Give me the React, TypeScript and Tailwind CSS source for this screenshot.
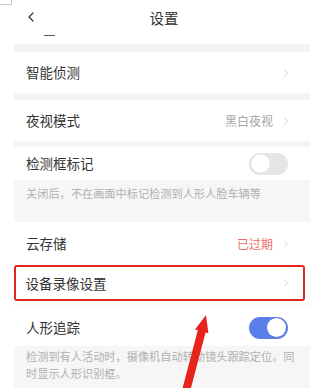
import { ChevronLeft, ChevronRight } from "lucide-react";

const font = { fontFamily: '"Noto Sans CJK SC", "Noto Sans", sans-serif' };

function Toggle({ on }: { on?: boolean }) {
    return (
        <div
            className={
                "w-[39px] h-[22px] rounded-full flex items-center px-[2px] " +
                (on ? "bg-[#5b7fe8] justify-end" : "bg-[#e6e6e6] justify-start")
            }
        >
            <div className="w-[19px] h-[19px] rounded-full bg-white shadow-[0_0_1px_rgba(0,0,0,0.2)]"></div>
        </div>
    );
}

function Row({ title, value, valueClass, toggle, on, height }: {
    title: string;
    value?: string;
    valueClass?: string;
    toggle?: boolean;
    on?: boolean;
    height: string;
}) {
    return (
        <div className={"flex items-center justify-between pl-3 pr-[18px] bg-white " + height}>
            <span className="text-[13.5px] text-[#333]">{title}</span>
            {toggle ? (
                <div className="mr-[4px]">
                    <Toggle on={on} />
                </div>
            ) : (
                <div className="flex items-center gap-[7px]">
                    {value && <span className={"text-[12px] " + valueClass}>{value}</span>}
                    <ChevronRight className="w-[12px] h-[12px] text-[#c4c4c4]" strokeWidth={1.6} />
                </div>
            )}
        </div>
    );
}

export default function App() {
    return (
        <div className="relative w-[328px] h-[388px] overflow-hidden bg-white" style={font}>
            {/* corner mark */}
            <div className="absolute top-0 left-0 w-[12px] h-[5px] border-b border-r border-[#c8c8c8]"></div>

            {/* Header */}
            <div className="relative h-[44px] flex items-start justify-center">
                <ChevronLeft className="absolute left-[23px] top-[9px] w-[16px] h-[16px] text-[#333]" strokeWidth={1.8} />
                <span className="mt-[7px] text-[14.5px] text-[#333]">设置</span>
                <div className="absolute left-[44px] top-[35px] w-[11px] h-px bg-[#555]"></div>
            </div>

            <div className="mx-[14px] w-[296px] flex flex-col">
                <div className="h-[8px] bg-[#f5f5f5]"></div>
                <Row title="智能侦测" height="h-[41px]" />
                <div className="h-[7px] bg-[#f5f5f5]"></div>
                <Row title="夜视模式" value="黑白夜视" valueClass="text-[#a6a6a6]" height="h-[41px]" />
                <div className="h-[6px] bg-[#f5f5f5]"></div>
                <Row title="检测框标记" toggle height="h-[33px]" />
                <div className="h-[42px] bg-[#f6f6f6] px-3 pt-[5px]">
                    <p className="text-[11.2px] leading-[16px] text-[#b0b0b0]">关闭后，不在画面中标记检测到人形人脸车辆等</p>
                </div>
                <Row title="云存储" value="已过期" valueClass="text-[#ef6b6b]" height="h-[43px]" />
                <div className="h-[36px] w-[291px] border-[2.5px] border-[#e0281f] rounded-[3px] flex items-center justify-between pl-[9.5px] pr-[11px]">
                    <span className="text-[13.5px] text-[#333]">设备录像设置</span>
                    <ChevronRight className="w-[12px] h-[12px] text-[#c4c4c4]" strokeWidth={1.6} />
                </div>
                <div className="h-[8px] bg-[#fcfcfc]"></div>
                <Row title="人形追踪" toggle on height="h-[37px]" />
                <div className="h-[60px] bg-[#f6f6f6] px-3 pt-[2px]">
                    <p className="text-[11.2px] leading-[17px] text-[#b0b0b0]">
                        检测到有人活动时，摄像机自动转动镜头跟踪定位。同时显示人形识别框。
                    </p>
                </div>
            </div>

            {/* red annotation arrow */}
            <svg className="absolute left-0 top-0 pointer-events-none" width="328" height="388" viewBox="0 0 328 388">
                <polygon
                    points="182.1,390 197.8,330.3 195,329.5 206,315 208.4,333.3 205.6,332.5 189.9,392"
                    fill="#e8231b"
                />
            </svg>
        </div>
    );
}
